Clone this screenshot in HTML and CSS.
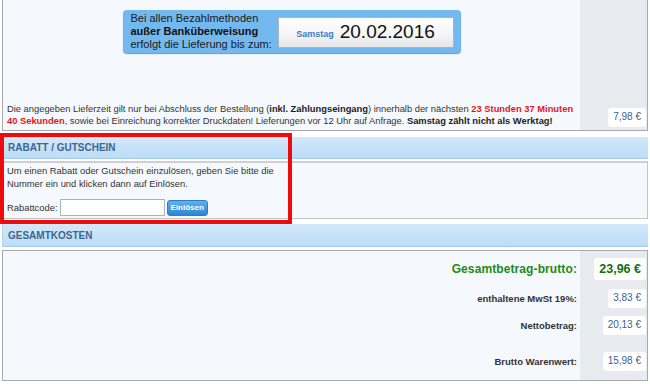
FILE: index.html
```html
<!DOCTYPE html>
<html lang="de">
<head>
<meta charset="utf-8">
<title>Warenkorb</title>
<link rel="stylesheet" href="styles.css">
</head>
<body>
<div class="page">
  <section class="delivery">
    <div class="delivery-main">
      <div class="info-box">
        <div class="info-text">
          Bei allen Bezahlmethoden<br>
          <b>außer Banküberweisung</b><br>
          erfolgt die Lieferung bis zum:
        </div>
        <div class="date-box">
          <span class="weekday">Samstag</span>
          <span class="date">20.02.2016</span>
        </div>
      </div>
      <p class="delivery-note">Die angegeben Lieferzeit gilt nur bei Abschluss der Bestellung (<b>inkl. Zahlungseingang</b>) innerhalb der nächsten <b class="red">23 Stunden 37 Minuten 40 Sekunden</b>, sowie bei Einreichung korrekter Druckdaten! Lieferungen vor 12 Uhr auf Anfrage. <b>Samstag zählt nicht als Werktag!</b></p>
    </div>
    <div class="side">
      <span class="price">7,98 €</span>
    </div>
  </section>

  <div class="coupon-wrap">
    <h2 class="bar">RABATT / GUTSCHEIN</h2>
    <div class="panel coupon">
      <p>Um einen Rabatt oder Gutschein einzulösen, geben Sie bitte die<br>Nummer ein und klicken dann auf Einlösen.</p>
      <div class="code-row">
        <label for="code">Rabattcode:</label>
        <input id="code" class="code-input" type="text">
        <button class="redeem" type="button">Einlösen</button>
      </div>
    </div>
    <div class="highlight"></div>
  </div>

  <h2 class="bar bar-total">GESAMTKOSTEN</h2>
  <section class="totals">
    <div class="totals-main">
      <div class="t-label big">Gesamtbetrag-brutto:</div>
      <div class="t-label r1">enthaltene MwSt 19%:</div>
      <div class="t-label r2">Nettobetrag:</div>
      <div class="t-label r3">Brutto Warenwert:</div>
    </div>
    <div class="side totals-side">
      <span class="price big">23,96 €</span>
      <span class="price r1">3,83 €</span>
      <span class="price r2">20,13 €</span>
      <span class="price r3">15,98 €</span>
    </div>
  </section>
</div>
</body>
</html>
```

FILE: styles.css
```css
* { box-sizing: border-box; }
html, body { margin: 0; padding: 0; background: #fff; }
body {
  font-family: "Liberation Sans", Arial, sans-serif;
  color: #333;
  width: 650px;
  height: 384px;
  overflow: hidden;
}
.page { padding: 0 2px 0 2px; }

.delivery {
  display: flex;
  height: 131px;
  border: 1px solid #a9a9a9;
  border-top: none;
  background: #f5f9fe;
}
.delivery-main {
  flex: 1;
  display: flex;
  flex-direction: column;
  align-items: center;
  padding-top: 10px;
}
.side {
  width: 67px;
  background: #e7eaee;
  display: flex;
  flex-direction: column;
  align-items: flex-end;
  padding-right: 1px;
}
.delivery .side { justify-content: flex-end; padding-bottom: 3px; }

.info-box {
  width: 338px;
  height: 43px;
  background: #74b8f0;
  border-radius: 4px;
  box-shadow: 0 1px 1px #5a9ad3;
  display: flex;
  align-items: center;
  padding: 0 7px 0 8px;
  justify-content: space-between;
}
.info-text {
  font-size: 11px;
  line-height: 13px;
  color: #1a1a1a;
}
.info-text b { color: #111; }
.date-box {
  width: 176px;
  height: 31px;
  border: 1px solid #a8b4c0;
  background: linear-gradient(#ffffff, #f4f4f4 60%, #e6e6e6);
  display: flex;
  align-items: center;
  justify-content: center;
  gap: 6px;
  margin-top: 1px;
}
.weekday { color: #3a7cc4; font-size: 9px; font-weight: bold; padding-top: 4px; }
.date { font-size: 19px; color: #111; }

.delivery-note {
  margin: auto 0 0 0;
  align-self: stretch;
  padding: 0 4px 3px 4px;
  font-size: 9.35px;
  line-height: 12px;
  color: #333;
}
.delivery-note b { color: #222; }
.delivery-note .red { color: #e8141b; }

.price {
  background: #fff;
  border-radius: 3px;
  color: #3b5f91;
  font-size: 10px;
  padding: 3px 5px 4px;
  line-height: 12px;
}

.coupon-wrap { position: relative; margin-top: 6px; }
.bar {
  margin: 0;
  height: 22px;
  line-height: 21px;
  padding-left: 5px;
  font-size: 10px;
  font-weight: bold;
  color: #3d668f;
  background: linear-gradient(#d3e8fb, #bcdcf7);
  border-bottom: 1px solid #a8c9e8;
  border-left: 1px solid #b6d3ee;
}
.panel {
  margin-top: 2px;
  border: 1px solid #c4c4c4;
  border-top: 2px solid #d0d0d0;
  background: #f5f9fe;
}
.coupon { height: 58px; padding: 1px 4px 0 4px; }
.coupon p {
  margin: 0;
  font-size: 9.4px;
  line-height: 13px;
  color: #333;
}
.code-row {
  display: flex;
  align-items: center;
  margin-top: 9px;
  font-size: 9.4px;
}
.code-input {
  width: 105px;
  height: 17px;
  margin: 0 2px 0 2px;
  border: 1px solid #aab3bd;
  background: #fff;
  padding: 0;
}
.redeem {
  height: 16px;
  padding: 0 3px;
  border: 1px solid #2a7fc4;
  border-radius: 3px;
  background: linear-gradient(#5fb0ee, #2c86d2);
  color: #fff;
  font-family: "Liberation Sans", Arial, sans-serif;
  font-weight: bold;
  font-size: 8px;
  line-height: 14px;
}
.highlight {
  position: absolute;
  left: -2px;
  top: -4px;
  width: 292px;
  height: 91px;
  border: 4px solid #ee0b0b;
  pointer-events: none;
}

.bar-total { margin-top: 5px; height: 23px; line-height: 23px; }

.totals {
  display: flex;
  margin-top: 3px;
  height: 131px;
  border: 1px solid #a9a9a9;
  background: #f5f9fe;
}
.totals-main {
  flex: 1;
  display: flex;
  flex-direction: column;
  align-items: flex-end;
  padding-right: 3px;
  padding-top: 7px;
}
.totals-side { padding-top: 7px; }
.t-label {
  font-size: 9.5px;
  font-weight: bold;
  color: #333;
  line-height: 19px;
}
.t-label.big { font-size: 12px; color: #1f8a17; line-height: 22px; letter-spacing: 0.1px; }
.t-label.r1, .price.r1 { margin-top: 9px; }
.t-label.r2, .price.r2 { margin-top: 8px; }
.t-label.r3, .price.r3 { margin-top: 17px; }
.totals-side .price.big {
  color: #137013;
  font-weight: bold;
  font-size: 12.5px;
  padding: 5px 5px;
  line-height: 12px;
}
```
